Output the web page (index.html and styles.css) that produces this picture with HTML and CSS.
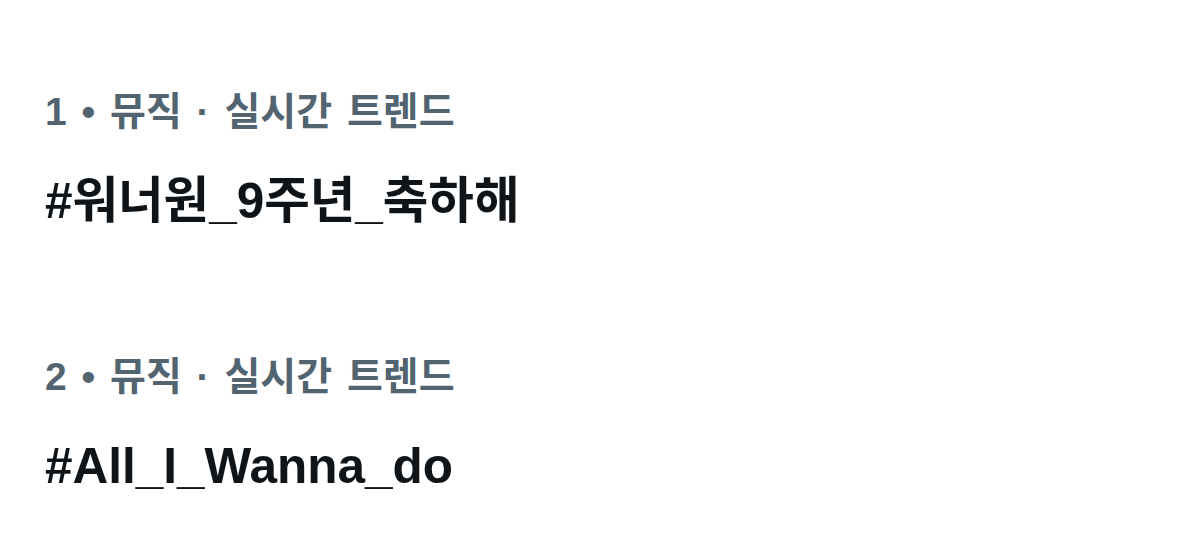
FILE: index.html
```html
<!DOCTYPE html>
<html lang="ko">

<head>
    <meta charset="UTF-8">
    <title>실시간 트렌드</title>
    <link rel="stylesheet" href="styles.css">
</head>

<body>

    <div class="trends">
        <div class="trend">
            <div class="meta">1 • 뮤직 · 실시간 트렌드</div>
            <div class="tag">#워너원_9주년_축하해</div>
        </div>
        <div class="trend">
            <div class="meta">2 • 뮤직 · 실시간 트렌드</div>
            <div class="tag">#All_I_Wanna_do</div>
        </div>
    </div>

</body>

</html>
```

FILE: styles.css
```css
body {
    font-family: 'Liberation Sans', 'Noto Sans CJK KR', sans-serif;
    margin: 0;
    padding: 0;
    background: #fff;
}

.trends {
    padding: 87px 0 0 45px;
}

.trend + .trend {
    margin-top: 116px;
}

.meta {
    font-size: 39px;
    font-weight: bold;
    color: #536471;
    line-height: 50px;
    word-spacing: 4px;
}

.tag {
    font-size: 49.5px;
    font-weight: bold;
    color: #0f1419;
    line-height: 70px;
    margin-top: 29px;
}
```
